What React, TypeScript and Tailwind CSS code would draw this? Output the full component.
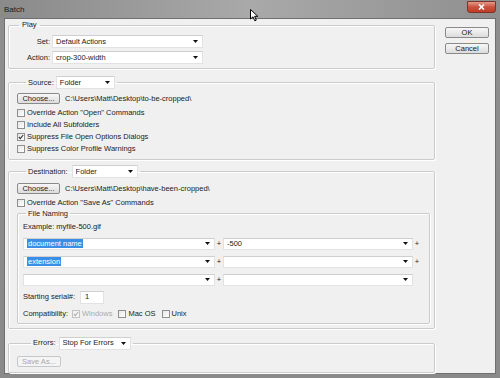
import React from "react";

function Arrow() {
  return (
    <svg width="5" height="3" viewBox="0 0 5 3" className="shrink-0">
      <polygon points="0,0 5,0 2.5,3" fill="#111" />
    </svg>
  );
}

function Select({ w, h = 13, text, hl = false }: { w: string; h?: number; text?: string; hl?: boolean }) {
  return (
    <div
      className={`${w} ${h === 12 ? "h-[12px]" : "h-[13px]"} bg-white border border-[#e2e2e2] border-t-[#cfcfcf] flex items-center pl-[3px] pr-[4px] shrink-0`}
    >
      <span className="flex-1 truncate leading-[10px]">
        {text ? (
          hl ? (
            <span className="bg-[#3a8ee6] text-white px-[1px]">{text}</span>
          ) : (
            text
          )
        ) : null}
      </span>
      <Arrow />
    </div>
  );
}

function Button({ label, w = "w-[44px]", disabled = false }: { label: string; w?: string; disabled?: boolean }) {
  return (
    <div
      className={`${w} h-[11px] shrink-0 rounded-[2px] border flex items-center justify-center leading-[9px] ${
        disabled
          ? "border-[#c4c8ca] bg-[#f4f4f4] text-[#a8a8a8]"
          : "border-[#8a8a8a] bg-gradient-to-b from-[#f7f7f7] to-[#dcdcdc] text-[#1a1a1a]"
      }`}
    >
      {label}
    </div>
  );
}

function Check({ checked = false, disabled = false }: { checked?: boolean; disabled?: boolean }) {
  return (
    <div
      className={`w-[8px] h-[8px] shrink-0 border ${
        disabled ? "border-[#c2c2c2] bg-[#f4f4f4]" : "border-[#8e8f8f] bg-gradient-to-br from-[#e6e6e6] to-white"
      } flex items-center justify-center`}
    >
      {checked ? (
        <svg width="6" height="6" viewBox="0 0 6 6">
          <polyline
            points="0.8,3 2.3,4.6 5.2,1"
            fill="none"
            stroke={disabled ? "#b0b0b0" : "#333"}
            strokeWidth="1.1"
          />
        </svg>
      ) : null}
    </div>
  );
}

function CheckRow({ label, checked = false }: { label: string; checked?: boolean }) {
  return (
    <div className="h-[12px] flex items-center gap-[2px]">
      <Check checked={checked} />
      <span className="leading-[10px]">{label}</span>
    </div>
  );
}

const fs = "border border-[#cbcbcb] rounded-[2px] shadow-[inset_1px_1px_0_#ffffff,1px_1px_0_#ffffff]";

export default function App() {
  return (
    <div className="w-[500px] h-[378px] relative overflow-hidden flex flex-col bg-gradient-to-b from-[#8e8e8e] to-[#8a8a8a] font-['Liberation_Sans',Arial,sans-serif] text-[7.5px] text-[#1b1b1b]">
      {/* title bar */}
      <div className="h-[18px] shrink-0 flex items-start bg-gradient-to-r from-[#8a8a8a] via-[#a9a9a9] to-[#8f8f8f]">
        <span className="ml-[4px] mt-[5px] text-[8px] leading-[9px] text-[#1a1a1a]">Batch</span>
        <div className="ml-auto mr-[4px] mt-[1px] w-[29px] h-[12px] rounded-b-[3px] border border-[#7a3328] bg-gradient-to-b from-[#e39a8c] via-[#c9513c] to-[#c23c26] flex items-center justify-center">
          <svg width="7" height="6" viewBox="0 0 7 6">
            <path d="M1 0.5 L6 5.5 M6 0.5 L1 5.5" stroke="#fff" strokeWidth="1.6" />
          </svg>
        </div>
      </div>

      {/* body */}
      <div className="flex-1 flex pl-[4px] pr-[4px] pb-[5px]">
        <div className="flex-1 bg-[#f0f0f0] border border-[#6f6f6f] flex pl-[3px] pt-[1px]">
          {/* left column */}
          <div className="w-[427px] flex flex-col">
            {/* Play */}
            <fieldset className={`${fs} pt-[5px] pb-[4px]`}>
              <legend className="ml-[10px] px-[3px] leading-[10px]">Play</legend>
              <div className="flex flex-col gap-[3px]">
                <div className="flex items-center">
                  <span className="w-[41px] text-right">Set:</span>
                  <div className="ml-[2px]">
                    <Select w="w-[151px]" text="Default Actions" />
                  </div>
                </div>
                <div className="flex items-center">
                  <span className="w-[41px] text-right">Action:</span>
                  <div className="ml-[2px]">
                    <Select w="w-[151px]" text="crop-300-width" />
                  </div>
                </div>
              </div>
            </fieldset>

            {/* Source */}
            <fieldset className={`${fs} mt-[7px] pt-[4px] pb-[4px] pl-[8px]`}>
              <legend className="ml-[9px] px-[2px] flex items-center gap-[2px]">
                <span>Source:</span>
                <Select w="w-[59px]" text="Folder" />
              </legend>
              <div className="flex items-center">
                <Button label="Choose..." w="w-[43px]" />
                <span className="ml-[5px]">C:\Users\Matt\Desktop\to-be-cropped\</span>
              </div>
              <div className="mt-[3px] flex flex-col">
                <CheckRow label={'Override Action "Open" Commands'} />
                <CheckRow label="Include All Subfolders" />
                <CheckRow label="Suppress File Open Options Dialogs" checked />
                <CheckRow label="Suppress Color Profile Warnings" />
              </div>
            </fieldset>

            {/* Destination */}
            <fieldset className={`${fs} mt-[5px] pt-[5px] pb-[4px] pl-[8px] pr-[4px]`}>
              <legend className="ml-[9px] px-[2px] flex items-center gap-[4px]">
                <span>Destination:</span>
                <Select w="w-[66px]" text="Folder" />
              </legend>
              <div className="flex items-center">
                <Button label="Choose..." w="w-[43px]" />
                <span className="ml-[5px]">C:\Users\Matt\Desktop\have-been-cropped\</span>
              </div>
              <div className="mt-[3px] h-[11px] flex items-center gap-[2px]">
                <Check />
                <span className="leading-[10px]">Override Action "Save As" Commands</span>
              </div>

              {/* File Naming */}
              <fieldset className={`${fs} pt-[3px] pb-[4px] pl-[5px]`}>
                <legend className="ml-[3px] px-[2px] leading-[10px]">File Naming</legend>
                <div className="h-[10px] leading-[10px]">Example: myfile-500.gif</div>
                <div className="mt-[6px] flex flex-col gap-[6px]">
                  <div className="flex items-center">
                    <Select w="w-[192px]" h={12} text="document name" hl />
                    <span className="w-[8px] text-center">+</span>
                    <Select w="w-[190px]" h={12} text="-500" />
                    <span className="w-[8px] text-center">+</span>
                  </div>
                  <div className="flex items-center">
                    <Select w="w-[192px]" h={12} text="extension" hl />
                    <span className="w-[8px] text-center">+</span>
                    <Select w="w-[190px]" h={12} />
                    <span className="w-[8px] text-center">+</span>
                  </div>
                  <div className="flex items-center">
                    <Select w="w-[192px]" h={12} />
                    <span className="w-[8px] text-center">+</span>
                    <Select w="w-[190px]" h={12} />
                  </div>
                </div>
                <div className="mt-[5px] flex items-center">
                  <span className="w-[57px]">Starting serial#:</span>
                  <div className="w-[24px] h-[13px] bg-white border border-[#e2e2e2] border-t-[#cfcfcf] pl-[4px] flex items-center">
                    1
                  </div>
                </div>
                <div className="mt-[5px] h-[10px] flex items-center">
                  <span className="w-[49px]">Compatibility:</span>
                  <Check checked disabled />
                  <span className="ml-[2px] text-[#ababab]">Windows</span>
                  <div className="ml-[6px]">
                    <Check />
                  </div>
                  <span className="ml-[2px]">Mac OS</span>
                  <div className="ml-[6px]">
                    <Check />
                  </div>
                  <span className="ml-[2px]">Unix</span>
                </div>
              </fieldset>
            </fieldset>

            {/* Errors */}
            <fieldset className={`${fs} mt-[8px] pt-[6px] pb-[5px] pl-[8px]`}>
              <legend className="ml-[14px] px-[2px] flex items-center gap-[3px]">
                <span>Errors:</span>
                <Select w="w-[72px]" text="Stop For Errors" />
              </legend>
              <Button label="Save As..." disabled />
            </fieldset>
          </div>

          {/* right column */}
          <div className="ml-[10px] mt-[7px] flex flex-col gap-[5px]">
            <Button label="OK" />
            <Button label="Cancel" />
          </div>
        </div>
      </div>

      {/* mouse cursor */}
      <svg className="absolute left-[250px] top-[9px]" width="9" height="13" viewBox="0 0 9 13">
        <path d="M0.5 0.5 L0.5 10 L3 7.8 L4.8 11.8 L6.3 11.1 L4.6 7.3 L7.8 7.3 Z" fill="#fff" stroke="#000" strokeWidth="1" strokeLinejoin="round" />
      </svg>
    </div>
  );
}
